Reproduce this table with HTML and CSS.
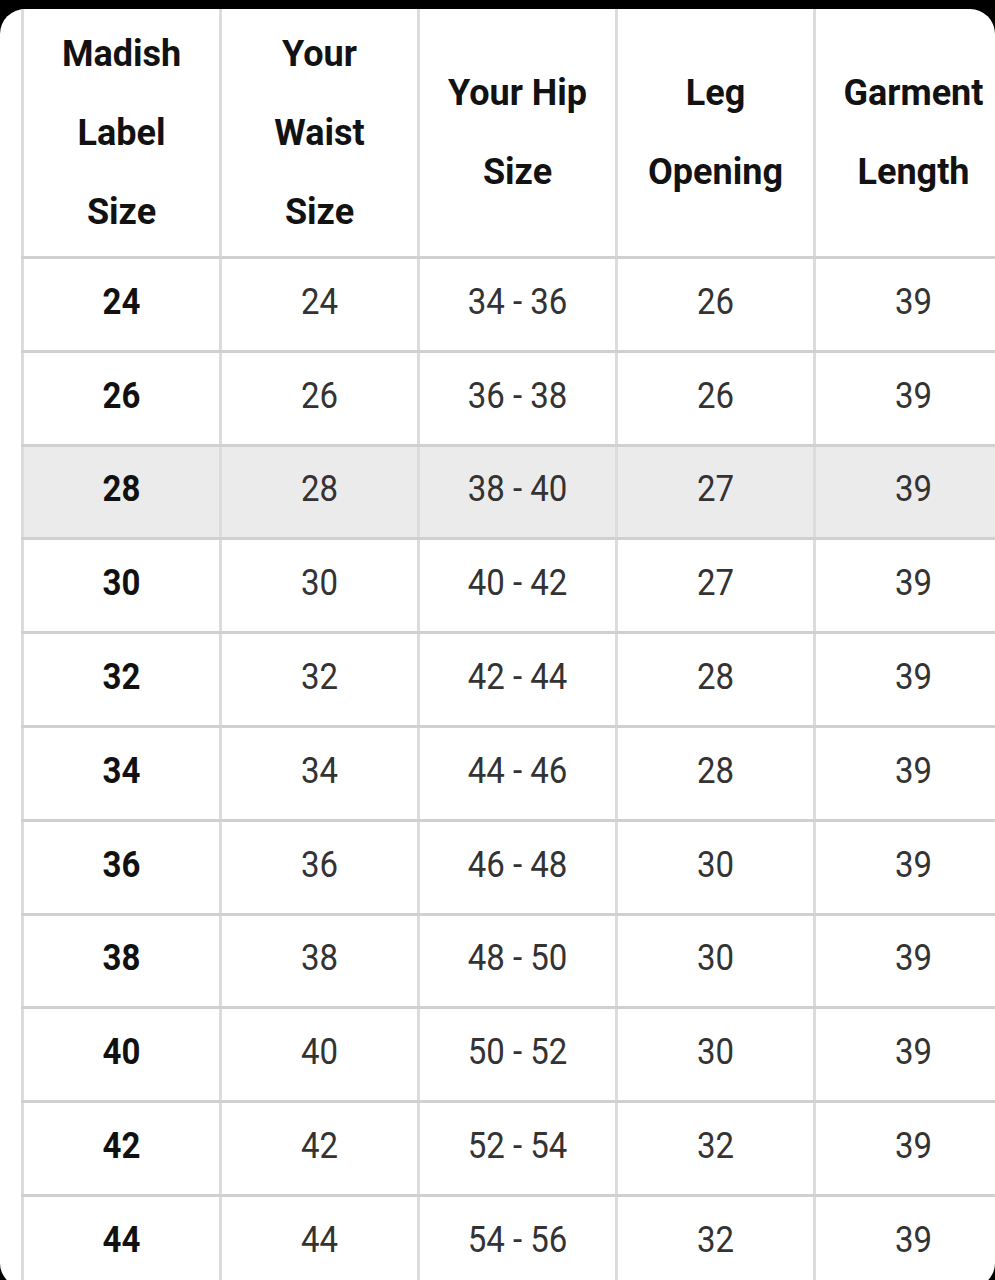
FILE: index.html
```html
<!DOCTYPE html>
<html lang="en">
<head>
<meta charset="utf-8">
<title>Size Chart</title>
<link rel="stylesheet" href="styles.css">
</head>
<body>
<div class="card">
  <div class="chart">
    <div class="row head">
      <div class="cell"><span>Madish<br>Label<br>Size</span></div>
      <div class="cell"><span>Your<br>Waist<br>Size</span></div>
      <div class="cell"><span>Your Hip<br>Size</span></div>
      <div class="cell"><span>Leg<br>Opening</span></div>
      <div class="cell"><span>Garment<br>Length</span></div>
    </div>
    <div class="row"><div class="cell"><span class="n b">24</span></div><div class="cell"><span class="n">24</span></div><div class="cell"><span class="n">34 - 36</span></div><div class="cell"><span class="n">26</span></div><div class="cell"><span class="n">39</span></div></div>
    <div class="row"><div class="cell"><span class="n b">26</span></div><div class="cell"><span class="n">26</span></div><div class="cell"><span class="n">36 - 38</span></div><div class="cell"><span class="n">26</span></div><div class="cell"><span class="n">39</span></div></div>
    <div class="row hl"><div class="cell"><span class="n b">28</span></div><div class="cell"><span class="n">28</span></div><div class="cell"><span class="n">38 - 40</span></div><div class="cell"><span class="n">27</span></div><div class="cell"><span class="n">39</span></div></div>
    <div class="row"><div class="cell"><span class="n b">30</span></div><div class="cell"><span class="n">30</span></div><div class="cell"><span class="n">40 - 42</span></div><div class="cell"><span class="n">27</span></div><div class="cell"><span class="n">39</span></div></div>
    <div class="row"><div class="cell"><span class="n b">32</span></div><div class="cell"><span class="n">32</span></div><div class="cell"><span class="n">42 - 44</span></div><div class="cell"><span class="n">28</span></div><div class="cell"><span class="n">39</span></div></div>
    <div class="row"><div class="cell"><span class="n b">34</span></div><div class="cell"><span class="n">34</span></div><div class="cell"><span class="n">44 - 46</span></div><div class="cell"><span class="n">28</span></div><div class="cell"><span class="n">39</span></div></div>
    <div class="row"><div class="cell"><span class="n b">36</span></div><div class="cell"><span class="n">36</span></div><div class="cell"><span class="n">46 - 48</span></div><div class="cell"><span class="n">30</span></div><div class="cell"><span class="n">39</span></div></div>
    <div class="row"><div class="cell"><span class="n b">38</span></div><div class="cell"><span class="n">38</span></div><div class="cell"><span class="n">48 - 50</span></div><div class="cell"><span class="n">30</span></div><div class="cell"><span class="n">39</span></div></div>
    <div class="row"><div class="cell"><span class="n b">40</span></div><div class="cell"><span class="n">40</span></div><div class="cell"><span class="n">50 - 52</span></div><div class="cell"><span class="n">30</span></div><div class="cell"><span class="n">39</span></div></div>
    <div class="row"><div class="cell"><span class="n b">42</span></div><div class="cell"><span class="n">42</span></div><div class="cell"><span class="n">52 - 54</span></div><div class="cell"><span class="n">32</span></div><div class="cell"><span class="n">39</span></div></div>
    <div class="row"><div class="cell"><span class="n b">44</span></div><div class="cell"><span class="n">44</span></div><div class="cell"><span class="n">54 - 56</span></div><div class="cell"><span class="n">32</span></div><div class="cell"><span class="n">39</span></div></div>
  </div>
</div>
</body>
</html>
```

FILE: styles.css
```css
html, body {
  margin: 0;
  padding: 0;
  background: #000;
  overflow: hidden;
  height: 1280px;
}

.card {
  margin-top: 9px;
  height: 1279px;
  width: 995px;
  background: #fff;
  border-radius: 25px;
  overflow: hidden;
  font-family: Roboto, "Liberation Sans", Arial, sans-serif;
}

.chart {
  padding-left: 21px;
  width: 1000px;
}

.row {
  display: grid;
  grid-template-columns: 198px 198px 198px 198px 198px;
  height: 90.8px;
  border-top: 3px solid #d0d0d0;
}

.row.head {
  height: 247px;
  border-top: none;
}

.row.hl {
  background: #ebebeb;
}

.cell {
  display: flex;
  align-items: center;
  justify-content: center;
  border-left: 3px solid #dcdcdc;
  text-align: center;
}

.head .cell {
  font-weight: 700;
  font-size: 36px;
  line-height: 79px;
  color: #121212;
  padding-top: 1px;
}

.n {
  display: inline-block;
  font-size: 33px;
  line-height: 1;
  color: #333;
  transform: translateY(-3px) scaleY(1.12);
}

.n.b {
  font-weight: 700;
  color: #111;
}
```
